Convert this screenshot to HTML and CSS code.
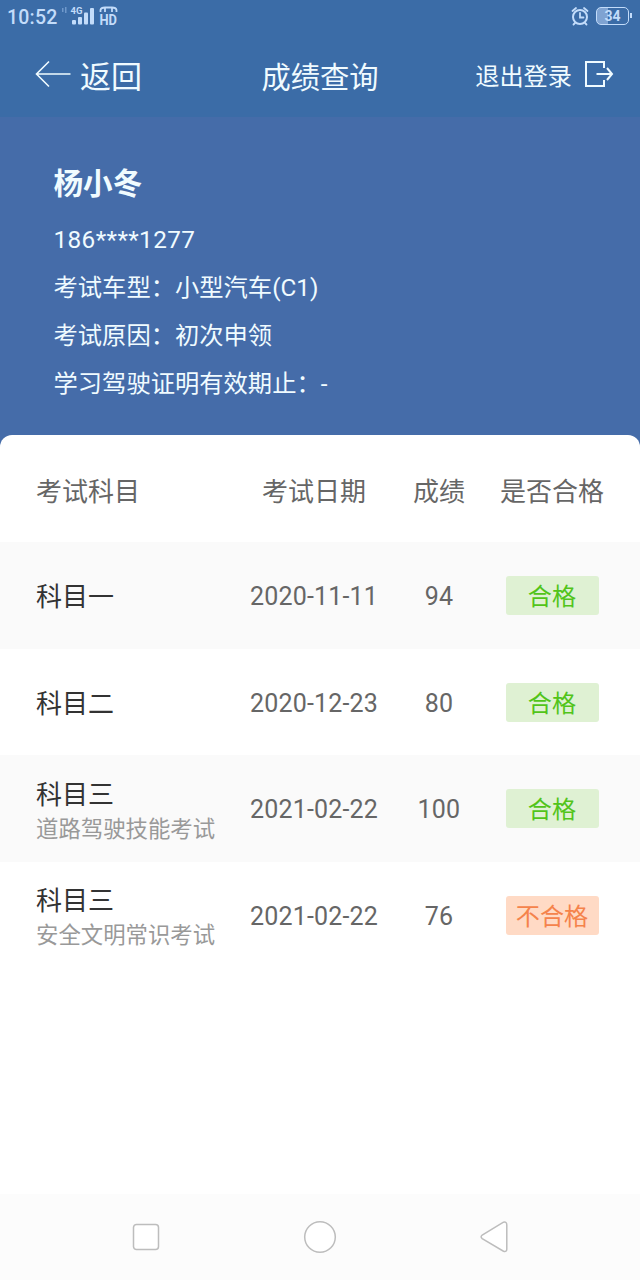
FILE: index.html
```
<!DOCTYPE html>
<html lang="zh-CN">
<head>
    <meta charset="UTF-8">
    <title>成绩查询</title>
    <link rel="stylesheet" href="styles.css">
</head>
<body>
    <div class="status-bar">
        <span class="time">10:52</span>
        <svg class="signal" width="60" height="28" viewBox="0 0 60 28">
            <g fill="#6f98cb">
                <rect x="1" y="4" width="1.5" height="4"/>
                <rect x="4" y="3" width="1.5" height="6"/>
            </g>
            <text x="9.500" y="10" class="net">4G</text>
            <g fill="#c3dcfa">
                <rect x="11" y="16" width="4" height="4.500" rx="1"/>
                <rect x="17" y="13" width="4" height="7.500" rx="1"/>
                <rect x="23" y="8.500" width="4" height="12" rx="1"/>
                <rect x="29" y="4" width="4" height="16.500" rx="1"/>
            </g>
            <path d="M39.500 8V6Q40 3.500 44 3.500H51Q55 3.500 55.500 6V8M44 8V4M51 8V4" fill="none" stroke="#c3dcfa" stroke-width="1.800"/>
            <text x="38.500" y="20.500" class="hd" textLength="17.500" lengthAdjust="spacingAndGlyphs">HD</text>
        </svg>
        <svg class="alarm" width="18" height="20" viewBox="0 0 18 20" fill="none" stroke="#c3dcfa" stroke-width="2" stroke-linecap="round">
            <circle cx="9" cy="11" r="7"/>
            <path d="M9 7V11.500H12.500M1.500 5L5 2M16.500 5L13 2M4 17L2.500 18.500M14 17L15.500 18.500" stroke-width="1.800"/>
        </svg>
        <div class="battery"><span>34</span></div>
    </div>

    <div class="header">
        <a class="back">
            <svg width="38" height="28" viewBox="0 0 38 28" fill="none" stroke="#f0fbff" stroke-width="1.600">
                <path d="M35.500 14H1.500M14 1.500L1.500 14L14 26.500"/>
            </svg>
            <span>返回</span>
        </a>
        <h1 class="title">成绩查询</h1>
        <a class="logout">
            <span>退出登录</span>
            <svg width="30" height="28" viewBox="0 0 30 28" fill="none" stroke="#f0fbff" stroke-width="2">
                <path d="M20 8V2H2V26H20V20M12.500 14H28M23 8L28 14L23 20"/>
            </svg>
        </a>
    </div>

    <div class="profile">
        <h2 class="name">杨小冬</h2>
        <p class="phone">186****1277</p>
        <p>考试车型：小型汽车(C1)</p>
        <p>考试原因：初次申领</p>
        <p>学习驾驶证明有效期止：-</p>
    </div>

    <div class="scores">
        <div class="row head">
            <div class="subject">考试科目</div>
            <div>考试日期</div>
            <div>成绩</div>
            <div>是否合格</div>
        </div>
        <div class="row gray">
            <div class="subject">科目一</div>
            <div class="num">2020-11-11</div>
            <div class="num">94</div>
            <div><span class="tag pass">合格</span></div>
        </div>
        <div class="row">
            <div class="subject">科目二</div>
            <div class="num">2020-12-23</div>
            <div class="num">80</div>
            <div><span class="tag pass">合格</span></div>
        </div>
        <div class="row gray">
            <div class="subject">科目三<small>道路驾驶技能考试</small></div>
            <div class="num">2021-02-22</div>
            <div class="num">100</div>
            <div><span class="tag pass">合格</span></div>
        </div>
        <div class="row">
            <div class="subject">科目三<small>安全文明常识考试</small></div>
            <div class="num">2021-02-22</div>
            <div class="num">76</div>
            <div><span class="tag fail">不合格</span></div>
        </div>
    </div>

    <div class="nav-bar">
        <svg width="34" height="34" viewBox="0 0 34 34"><rect x="4.500" y="4.500" width="25" height="25" rx="3"/></svg>
        <svg width="34" height="34" viewBox="0 0 34 34"><circle cx="17" cy="17" r="15.300"/></svg>
        <svg width="34" height="34" viewBox="0 0 34 34"><path d="M26.500 2.200L5.200 15Q3 16.800 5.200 18.600L26.500 31.200Q29.800 32.200 29.800 29V5Q29.800 1.500 26.500 2.200Z"/></svg>
    </div>
</body>
</html>
```

FILE: styles.css
```
* {
    box-sizing: border-box;
}
body {
    margin: 0;
    width: 640px;
    height: 1280px;
    display: flex;
    flex-direction: column;
    overflow: hidden;
    background-color: #456ca9;
    font-family: Roboto, "Noto Sans CJK SC", sans-serif;
}
h1, h2, p {
    margin: 0;
    font-weight: normal;
}
.status-bar {
    height: 34px;
    padding: 0 11px 2px 7px;
    display: flex;
    align-items: center;
    background-color: #3b6ca7;
    color: #c3dcfa;
}
.time {
    width: 54px;
    padding-top: 2px;
    font-size: 19.5px;
    font-weight: 500;
    letter-spacing: 0.2px;
}
.signal {
    margin-top: 4px;
}
.net {
    font-size: 9.5px;
    font-weight: bold;
    fill: #c3dcfa;
}
.hd {
    font-size: 15.5px;
    font-weight: bold;
    fill: #c3dcfa;
}
.alarm {
    margin-left: auto;
    margin-right: 7px;
}
.battery {
    position: relative;
    width: 33px;
    height: 18px;
    border: 1.5px solid #c3dcfa;
    border-radius: 5px;
    background: linear-gradient(to right, #7fa3d2 34%, transparent 34%);
    font-size: 14px;
    font-weight: bold;
    line-height: 16px;
    text-align: center;
}
.battery::after {
    content: "";
    position: absolute;
    right: -4px;
    top: 5px;
    width: 2px;
    height: 5px;
    background-color: #c3dcfa;
}
.header {
    height: 83px;
    padding: 0 26px 4px 35px;
    display: grid;
    grid-template-columns: 1fr auto 1fr;
    align-items: center;
    background-color: #3b6ca7;
    color: #f0fbff;
}
.header span, .title {
    padding-top: 2px;
}
.back, .logout {
    display: flex;
    align-items: center;
}
.back {
    gap: 7px;
    font-size: 31px;
}
.title {
    font-size: 29.3px;
    margin-left: -9px;
}
.logout {
    justify-content: flex-end;
    gap: 12px;
    font-size: 24.2px;
}
.profile {
    height: 318.4px;
    padding: 42.5px 53.5px 0;
    color: #f0fbff;
    font-size: 24.3px;
    line-height: 48.1px;
}
.name {
    margin-bottom: 8px;
    font-size: 29.6px;
    font-weight: bold;
}
.phone {
    letter-spacing: 0.4px;
}
.scores {
    flex: 1;
    background-color: #fff;
    border-radius: 12px 12px 0 0;
    color: #666;
    font-size: 26px;
}
.row {
    height: 106.7px;
    padding-left: 36px;
    display: grid;
    grid-template-columns: 203px 150px 100px 126px;
    align-items: center;
    text-align: center;
}
.gray {
    background-color: #fafafa;
}
.subject {
    padding-top: 3px;
    color: #333;
    text-align: left;
    line-height: 38px;
}
.head > div {
    padding-top: 6px;
    color: #666;
    line-height: 42px;
}
.subject small {
    display: block;
    color: #999;
    font-size: 22.4px;
    line-height: 31px;
}
.num {
    padding-top: 2px;
    font-size: 25px;
    letter-spacing: 0.2px;
}
.tag {
    display: block;
    width: 93px;
    height: 39px;
    margin: 0 auto;
    border-radius: 3px;
    font-size: 24.2px;
    line-height: 42px;
}
.pass {
    background-color: #dff1d3;
    color: #52c41a;
}
.fail {
    background-color: #ffdac5;
    color: #f5834b;
}
.nav-bar {
    height: 85.6px;
    padding: 0 129px;
    display: flex;
    justify-content: space-between;
    align-items: center;
    background-color: #fcfcfc;
}
.nav-bar svg {
    fill: #fff;
    stroke: #bdbdbd;
    stroke-width: 1.5;
}
```
